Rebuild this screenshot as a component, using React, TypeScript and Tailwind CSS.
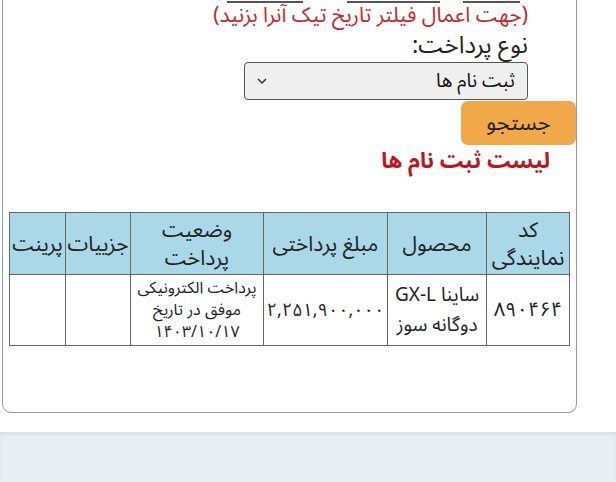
export default function App() {
  const font = { fontFamily: '"Noto Sans Arabic", "DejaVu Sans", sans-serif' };
  return (
    <div dir="rtl" className="w-[616px] h-[482px] overflow-hidden bg-white flex flex-col" style={font}>
      <div className="h-[432px] bg-white pr-[39px] pl-[2px]">
        <div className="-mt-[40px] h-[453px] border border-[#9a9a9a] rounded-[9px] flex flex-col">
          {/* date inputs cut off at the top */}
          <div className="h-[42px] flex pr-[56px] items-end">
            <div className="w-[57px] h-[12px] border-b-[2px] border-[#555]" />
            <div className="w-[93px] h-[12px] border-b-[2px] border-[#555] mr-[23px]" />
            <div className="w-[76px] h-[12px] border-b-[2px] border-[#555] mr-[44px]" />
          </div>
          <div className="pr-[48px] text-[21px] leading-[26px] -mt-[1px] text-[#c8262e]">
            (جهت اعمال فیلتر تاریخ تیک آنرا بزنید)
          </div>
          <div className="pr-[48px] mt-[3px] text-[24px] leading-[29px] text-[#222]">نوع پرداخت:</div>
          <div className="pr-[48px] mt-[2px]">
            <div className="w-[284px] h-[38px] bg-[#efefef] border border-[#555] rounded-[4px] flex items-center justify-between pr-[12px] pl-[10px]">
              <span className="text-[19px] text-[#111]">ثبت نام ها</span>
              <svg width="14" height="14" viewBox="0 0 14 14" fill="none" stroke="#333" strokeWidth="1.5">
                <path d="M3 5l4 4 4-4" />
              </svg>
            </div>
          </div>
          <div className="flex mt-[1px]">
            <button className="w-[115px] h-[44px] bg-[#f0a848] rounded-[7px] text-[22px] text-[#222]">جستجو</button>
          </div>
          <div className="pr-[26px] mt-[2px] text-[22px] leading-[28px] font-bold text-[#c0141c]">لیست ثبت نام ها</div>
          <div className="mt-[37px] pr-[6px] pl-[6px]">
            <table className="w-[561px] border-collapse text-[#222] text-center">
              <thead>
                <tr className="bg-[#aad8e8] h-[62px] text-[21px] leading-[28px]">
                  <th className="font-normal border border-[#666] w-[83px]">کد<br />نمایندگی</th>
                  <th className="font-normal border border-[#666] w-[99px]">محصول</th>
                  <th className="font-normal border border-[#666] w-[124px] whitespace-nowrap">مبلغ پرداختی</th>
                  <th className="font-normal border border-[#666] w-[133px]">وضعیت<br />پرداخت</th>
                  <th className="font-normal border border-[#666] w-[65px] whitespace-nowrap">جزییات</th>
                  <th className="font-normal border border-[#666] w-[56px] whitespace-nowrap">پرینت</th>
                </tr>
              </thead>
              <tbody>
                <tr className="h-[71px]">
                  <td className="border border-[#666] text-[20px]">۸۹۰۴۶۴</td>
                  <td className="border border-[#666] text-[19px] leading-[30px]">ساینا GX-L<br />دوگانه سوز</td>
                  <td className="border border-[#666] text-[18px] whitespace-nowrap">۲,۲۵۱,۹۰۰,۰۰۰</td>
                  <td className="border border-[#666] text-[16px] leading-[22px]">پرداخت الکترونیکی<br />موفق در تاریخ<br />۱۴۰۳/۱۰/۱۷</td>
                  <td className="border border-[#666]" />
                  <td className="border border-[#666]" />
                </tr>
              </tbody>
            </table>
          </div>
        </div>
      </div>
      <div className="flex-1 bg-[#e9eef2] border-t border-[#dde2e6] shadow-[inset_0_2px_3px_rgba(0,0,0,0.06)]" />
    </div>
  );
}
